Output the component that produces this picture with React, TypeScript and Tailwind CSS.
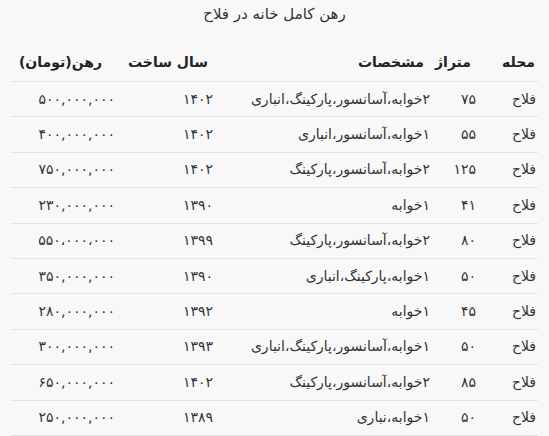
import React from "react";

const rows = [
  ["فلاح", "۷۵", "۲خوابه،آسانسور،پارکینگ،انباری", "۱۴۰۲", "۵۰۰,۰۰۰,۰۰۰"],
  ["فلاح", "۵۵", "۱خوابه،آسانسور،انباری", "۱۴۰۲", "۴۰۰,۰۰۰,۰۰۰"],
  ["فلاح", "۱۲۵", "۲خوابه،آسانسور،پارکینگ", "۱۴۰۲", "۷۵۰,۰۰۰,۰۰۰"],
  ["فلاح", "۴۱", "۱خوابه", "۱۳۹۰", "۲۳۰,۰۰۰,۰۰۰"],
  ["فلاح", "۸۰", "۲خوابه،آسانسور،پارکینگ", "۱۳۹۹", "۵۵۰،۰۰۰،۰۰۰"],
  ["فلاح", "۵۰", "۱خوابه،پارکینگ،انباری", "۱۳۹۰", "۳۵۰,۰۰۰,۰۰۰"],
  ["فلاح", "۴۵", "۱خوابه", "۱۳۹۲", "۲۸۰,۰۰۰,۰۰۰"],
  ["فلاح", "۵۰", "۱خوابه،آسانسور،پارکینگ،انباری", "۱۳۹۳", "۳۰۰,۰۰۰,۰۰۰"],
  ["فلاح", "۸۵", "۲خوابه،آسانسور،پارکینگ", "۱۴۰۲", "۶۵۰,۰۰۰,۰۰۰"],
  ["فلاح", "۵۰", "۱خوابه،نباری", "۱۳۸۹", "۲۵۰,۰۰۰,۰۰۰"],
];

const grid = "grid grid-cols-[60px_48px_213px_98px_108px]";

export default function App() {
  return (
    <div
      dir="rtl"
      className="w-[549px] h-[436px] overflow-hidden bg-[#f8f8f8] text-[#333] font-['DejaVu_Sans',sans-serif]"
    >
      <p className="pt-[3px] text-center text-[15px] leading-[22px]">رهن کامل خانه در فلاح</p>

      <div className="mx-[11px] mt-[19px]">
        {/* header */}
        <div className={`${grid} h-[38px] items-center border-b border-[#e4e4e4] text-[14px] font-bold text-[#222]`}>
          <div className="pr-[3px]">محله</div>
          <div className="pr-[7px]">متراژ</div>
          <div className="pr-[6px]">مشخصات</div>
          <div className="pr-[9px]">سال ساخت</div>
          <div className="pr-[17px] whitespace-nowrap">رهن(تومان)</div>
        </div>

        {rows.map((r, i) => (
          <div
            key={i}
            className={`${grid} h-[35.4px] items-center border-b border-[#e4e4e4] text-[14px]`}
          >
            <div className="pr-[2px]">{r[0]}</div>
            <div className="pr-[2px]">{r[1]}</div>
            <div className="whitespace-nowrap">{r[2]}</div>
            <div className="pr-[4px]">{r[3]}</div>
            <div className="pr-[4px]">{r[4]}</div>
          </div>
        ))}
      </div>
    </div>
  );
}
